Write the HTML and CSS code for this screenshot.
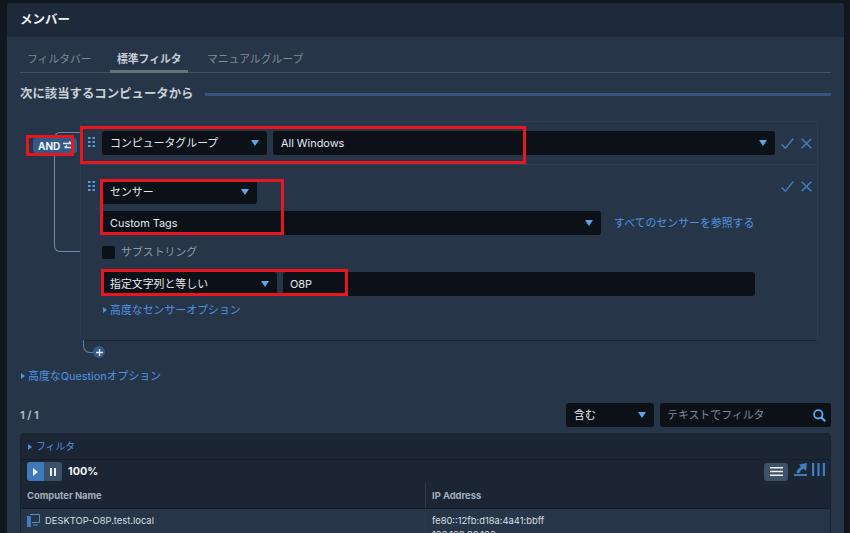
FILE: index.html
```html
<!DOCTYPE html>
<html lang="ja">
<head>
<meta charset="utf-8">
<title>メンバー</title>
<link rel="stylesheet" href="styles.css">
</head>
<body>
<main class="panel">
  <header class="panel-head">メンバー</header>
  <div class="panel-body">
    <nav class="tabs">
      <a class="tab">フィルタバー</a>
      <a class="tab active">標準フィルタ</a>
      <a class="tab">マニュアルグループ</a>
    </nav>
    <div class="heading"><h2>次に該当するコンピュータから</h2><span class="heading-bar"></span></div>

    <section class="builder">
      <span class="tree-line"></span>
      <span class="and-badge">AND <svg width="10" height="9" viewBox="0 0 10 9"><path d="M0 2.500h8M6 .5l2.500 2M10 6.500H2M4 4.500l-2.500 2" fill="none" stroke="#dfe8f2" stroke-width="1.300"/></svg></span>
      <div class="card">
        <div class="cond cond-first">
          <svg class="grip" width="7" height="10" viewBox="0 0 7 10"><g fill="#5b9ad8"><rect width="2.500" height="2"/><rect x="4.500" width="2.500" height="2"/><rect y="4" width="2.500" height="2"/><rect x="4.500" y="4" width="2.500" height="2"/><rect y="8" width="2.500" height="2"/><rect x="4.500" y="8" width="2.500" height="2"/></g></svg>
          <div class="select w165"><span>コンピュータグループ</span><i class="caret"></i></div>
          <div class="select grow"><span>All Windows</span><i class="caret"></i></div>
          <div class="actions">
            <svg width="13" height="11" viewBox="0 0 13 11"><path d="M.7 6.500l3.700 3.700L12.300.6" fill="none" stroke="#3f7ab8" stroke-width="1.600"/></svg>
            <svg width="11" height="11" viewBox="0 0 11 11"><path d="M.7.7l9.600 9.600M10.300.7L.7 10.300" fill="none" stroke="#3f7ab8" stroke-width="1.600"/></svg>
          </div>
        </div>
        <div class="cond cond-second">
          <svg class="grip grip-two" width="7" height="10" viewBox="0 0 7 10"><g fill="#5b9ad8"><rect width="2.500" height="2"/><rect x="4.500" width="2.500" height="2"/><rect y="4" width="2.500" height="2"/><rect x="4.500" y="4" width="2.500" height="2"/><rect y="8" width="2.500" height="2"/><rect x="4.500" y="8" width="2.500" height="2"/></g></svg>
          <div class="stack">
            <div class="select w155"><span>センサー</span><i class="caret"></i></div>
            <div class="sensor-row">
              <div class="select w499"><span>Custom Tags</span><i class="caret"></i></div>
              <a class="link">すべてのセンサーを参照する</a>
            </div>
            <label class="check"><i class="box"></i>サブストリング</label>
            <div class="op-row">
              <div class="select w175"><span>指定文字列と等しい</span><i class="caret"></i></div>
              <div class="select grow field"><span>O8P</span></div>
            </div>
            <a class="link disclosure"><i class="tri"></i>高度なセンサーオプション</a>
          </div>
          <div class="actions actions-two">
            <svg width="13" height="11" viewBox="0 0 13 11"><path d="M.7 6.500l3.700 3.700L12.300.6" fill="none" stroke="#3f7ab8" stroke-width="1.600"/></svg>
            <svg width="11" height="11" viewBox="0 0 11 11"><path d="M.7.7l9.600 9.600M10.300.7L.7 10.300" fill="none" stroke="#3f7ab8" stroke-width="1.600"/></svg>
          </div>
        </div>
      </div>
      <div class="add-row">
        <span class="add-curve"></span>
        <span class="add-btn"><svg width="7" height="7" viewBox="0 0 7 7"><path d="M3.500 0v7M0 3.500h7" stroke="#dfe8f2" stroke-width="1.400"/></svg></span>
      </div>
    </section>

    <a class="link disclosure question"><i class="tri"></i>高度なQuestionオプション</a>

    <div class="results-bar">
      <span class="count">1 / 1</span>
      <div class="select w88"><span>含む</span><i class="caret"></i></div>
      <div class="search"><span>テキストでフィルタ</span>
        <svg width="13" height="13" viewBox="0 0 13 13"><circle cx="5.300" cy="5.300" r="4.200" fill="none" stroke="#5ea6ee" stroke-width="1.800"/><path d="M8.500 8.500l3.700 3.700" stroke="#5ea6ee" stroke-width="2.200"/></svg>
      </div>
    </div>

    <section class="table">
      <div class="t-filter"><a class="link disclosure"><i class="tri"></i>フィルタ</a></div>
      <div class="t-tools">
        <div class="playpause">
          <span class="pp-play"><i class="pp-tri"></i></span>
          <span class="pp-pause"><svg width="6" height="8" viewBox="0 0 6 8"><path d="M0 0h2v8H0zM4 0h2v8H4z" fill="#e6edf5"/></svg></span>
        </div>
        <b class="pct">100%</b>
        <span class="spacer"></span>
        <span class="list-btn"><svg width="13" height="9" viewBox="0 0 13 9"><path d="M0 0h13v1.600H0zM0 3.700h13v1.600H0zM0 7.400h13V9H0z" fill="#f0f4f8"/></svg></span>
        <svg class="tool-export" width="13" height="13" viewBox="0 0 13 13"><path d="M0 11h13v2H0zM2.500 10c.2-3 1.800-5 4.500-6L5 1.500l8-1.500-1 8-2.200-2.200C7.500 6.500 6.300 8 5.500 10z" fill="#3f7fc0"/></svg>
        <svg class="tool-cols" width="13" height="13" viewBox="0 0 13 13"><path d="M0 0h2.200v13H0zM5.400 0h2.200v13H5.400zM10.800 0H13v13h-2.200z" fill="#3f7fc0"/></svg>
      </div>
      <div class="t-row t-head"><div class="col-a">Computer Name</div><div class="col-b">IP Address</div></div>
      <div class="t-row t-data">
        <div class="col-a name">
          <svg width="13" height="13" viewBox="0 0 13 13"><path d="M0 2h4v11H0z" fill="#3f7fc0"/><path d="M3 .5h9.500v8H5" fill="#263648" stroke="#5b8fc4" stroke-width="1"/><path d="M6 11h5" stroke="#5b8fc4"/></svg>
          DESKTOP-O8P.test.local
        </div>
        <div class="col-b">fe80::12fb:d18a:4a41:bbff<br>192.168.80.100</div>
      </div>
    </section>
  </div>
  <span class="mark mark-and"></span>
  <span class="mark mark-group"></span>
  <span class="mark mark-sensor"></span>
  <span class="mark mark-op"></span>
</main>
</body>
</html>
```

FILE: styles.css
```css
* { box-sizing: border-box; }
html, body { height: 100%; }
body {
  margin: 0;
  height: 533px;
  overflow: hidden;
  background: #10171f;
  color: #e4e9ef;
  font: 10.900px/14px Inter, "Noto Sans CJK JP", sans-serif;
}
i { display: block; }
a { display: block; }
.panel {
  position: relative;
  margin: 3px 6px 0 7px;
  height: 530px;
  overflow: hidden;
  border-radius: 4px 4px 0 0;
  background: #263648;
}
.panel-head {
  height: 34px;
  padding-left: 13px;
  line-height: 34px;
  font-size: 12.500px;
  font-weight: 700;
  color: #edf0f4;
  background: #1e2a3a;
}
.panel-body { padding: 0 13px; }

.tabs {
  display: flex;
  height: 36px;
  padding-left: 7px;
  border-bottom: 1px solid #46525f;
}
.tab {
  width: 64px;
  margin-right: 26px;
  padding-top: 15px;
  font-size: 10.800px;
  line-height: 16px;
  color: #7e8b99;
  white-space: nowrap;
}
.tab.active {
  position: relative;
  font-weight: 700;
  color: #c4ccd5;
}
.tab.active::after {
  content: "";
  position: absolute;
  left: -7px;
  right: -7px;
  bottom: -1px;
  height: 3px;
  background: #66737f;
}
.heading {
  display: flex;
  align-items: center;
  gap: 12px;
  height: 16px;
  margin-top: 13px;
}
.heading h2 {
  margin: 0;
  font-size: 12.400px;
  font-weight: 700;
  color: #c9d0d8;
  white-space: nowrap;
}
.heading-bar { flex: 1; height: 3px; background: #335580; }

.builder { position: relative; margin-top: 19px; padding-left: 60px; padding-right: 13px; }
.tree-line {
  position: absolute;
  left: 34px;
  top: 11px;
  width: 28px;
  height: 120px;
  border: 1px solid #6a88ae;
  border-right: 0;
  border-radius: 6px 0 0 6px;
}
.and-badge {
  position: absolute;
  left: 13px;
  top: 17px;
  display: flex;
  align-items: center;
  gap: 3px;
  height: 15px;
  padding: 0 4px 0 5px;
  border-radius: 3px;
  background: #335a86;
  font-size: 10px;
  font-weight: 700;
  color: #f0f4f8;
}
.card {
  position: relative;
  height: 220px;
  border: 1px solid #2d3e52;
  border-bottom-color: #1b2635;
  border-radius: 4px;
  background: #263648;
}
.cond { display: flex; padding-left: 21px; }
.cond-first {
  gap: 6px;
  height: 43px;
  padding-top: 9px;
  border-bottom: 1px solid #2f4157;
}
.grip { position: absolute; left: 7px; top: 15px; }
.cond-second .grip-two { top: 16px; }
.select {
  flex: none;
  display: flex;
  align-items: center;
  justify-content: space-between;
  height: 24px;
  padding: 0 8px 0 8px;
  border-radius: 3px;
  background: #0c1118;
  color: #e4e9ef;
  white-space: nowrap;
}
.select.grow { flex: 1; }
.select.field { padding-left: 7px; }
.w165 { width: 165px; }
.w155 { width: 155px; }
.w499 { width: 499px; }
.w175 { width: 175px; }
.w88 { width: 88px; }
.caret {
  width: 0;
  height: 0;
  border-left: 4.500px solid transparent;
  border-right: 4.500px solid transparent;
  border-top: 6px solid #5ea6ee;
}
.actions {
  flex: none;
  display: flex;
  align-items: center;
  gap: 7px;
  width: 36px;
  height: 24px;
}
.cond-second { position: relative; padding-top: 15px; }
.stack { display: flex; flex-direction: column; width: 653px; }
.actions-two { position: absolute; right: 0; top: 9px; }
.sensor-row { display: flex; align-items: center; gap: 13px; margin-top: 7px; }
.link { color: #4f93e0; white-space: nowrap; }
.check {
  display: flex;
  align-items: center;
  gap: 6px;
  height: 14px;
  margin-top: 10px;
  color: #8e9aa8;
}
.box { width: 13px; height: 13px; border-radius: 2px; background: #0c1118; }
.op-row { display: flex; gap: 6px; margin-top: 13px; }
.disclosure { display: flex; align-items: center; gap: 3px; }
.stack .disclosure { margin-top: 7px; padding-left: 1px; }
.tri {
  width: 0;
  height: 0;
  border-top: 3.500px solid transparent;
  border-bottom: 3.500px solid transparent;
  border-left: 4px solid #4f93e0;
}
.add-row { position: relative; height: 18px; }
.add-curve {
  position: absolute;
  left: 3px;
  top: -1px;
  width: 12px;
  height: 13px;
  border: 1px solid #5f7fa6;
  border-top: 0;
  border-right: 0;
  border-radius: 0 0 0 7px;
}
.add-btn {
  position: absolute;
  left: 13px;
  top: 5px;
  display: flex;
  align-items: center;
  justify-content: center;
  width: 12px;
  height: 12px;
  border-radius: 50%;
  background: #335a86;
}
.question { margin-top: 10px; padding-left: 1px; }

.results-bar { display: flex; align-items: center; margin-top: 20px; gap: 6px; }
.count { flex: 1; font-weight: 700; color: #a9b3bf; }
.search {
  display: flex;
  align-items: center;
  justify-content: space-between;
  width: 171px;
  height: 24px;
  padding: 0 5px 0 7px;
  border-radius: 3px;
  background: #0c1118;
  color: #7f8b98;
}
.table {
  margin-top: 6px;
  border: 1px solid #1a2331;
  border-bottom: 0;
  border-radius: 4px 4px 0 0;
  background: #1b2533;
}
.t-filter {
  display: flex;
  align-items: center;
  height: 26px;
  padding-left: 7px;
  border-bottom: 1px solid #141c27;
  font-size: 9.800px;
}
.t-filter .disclosure { gap: 4px; }
.t-tools {
  display: flex;
  align-items: center;
  height: 24px;
  padding-left: 6px;
  padding-right: 5px;
  border-bottom: 1px solid #1e2936;
}
.playpause { display: flex; width: 35px; height: 19px; border-radius: 3px; overflow: hidden; }
.pp-play, .pp-pause { display: flex; align-items: center; justify-content: center; }
.pp-play { width: 17px; background: #3f7ab8; }
.pp-pause { width: 18px; background: #3d5268; }
.pp-tri {
  width: 0;
  height: 0;
  border-top: 4px solid transparent;
  border-bottom: 4px solid transparent;
  border-left: 5px solid #f0f4f8;
}
.pct { margin-left: 6px; font-size: 10.800px; color: #f0f4f8; }
.spacer { flex: 1; }
.list-btn {
  display: flex;
  align-items: center;
  justify-content: center;
  width: 24px;
  height: 18px;
  border-radius: 3px;
  background: #3f5268;
}
.tool-export { margin-left: 6px; margin-top: -5px; }
.tool-cols { margin-left: 5px; margin-top: -5px; }
.t-row { display: flex; }
.t-head { height: 25px; border-bottom: 1px solid #141c27; font-size: 9.400px; font-weight: 700; color: #a3afbd; }
.col-a { width: 405px; padding-left: 6px; border-right: 1px solid #2c3a4b; }
.col-b { flex: 1; padding-left: 6px; }
.t-head > div { line-height: 24px; }
.t-data { background: #263648; font-size: 9.400px; color: #d8dee5; padding-top: 5px; }
.t-data .col-a { display: flex; align-items: flex-start; gap: 5px; margin-top: -5px; padding-top: 5px; height: 40px; }

.mark { position: absolute; border: 3px solid #e8171f; pointer-events: none; }
.mark-and { left: 19px; top: 132px; width: 48px; height: 21px; }
.mark-group { left: 73px; top: 123px; width: 446px; height: 38px; }
.mark-sensor { left: 93px; top: 176px; width: 184px; height: 56px; }
.mark-op { left: 94px; top: 266px; width: 247px; height: 27px; }
```
